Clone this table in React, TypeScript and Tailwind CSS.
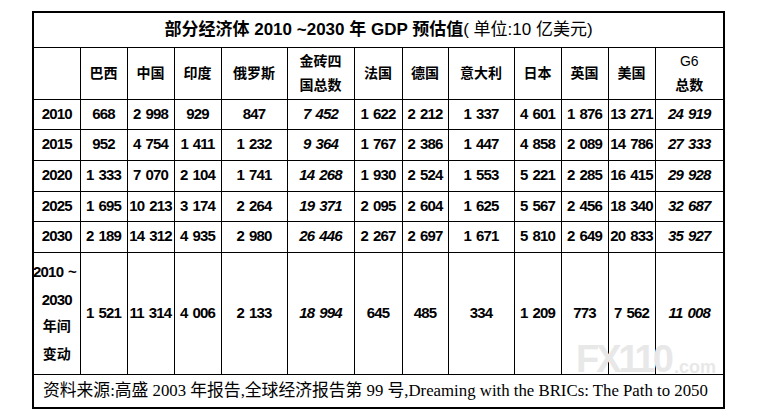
const cols = ['巴西', '中国', '印度', '俄罗斯', '金砖四国总数', '法国', '德国', '意大利', '日本', '英国', '美国', 'G6总数'];
const widths = [47, 47, 47, 47, 66, 67, 48, 46, 66, 47, 47, 47, 69];

const rows: { year: string; vals: string[]; h: string }[] = [
  { year: '2010', h: 'h-[30px]', vals: ['668', '2 998', '929', '847', '7 452', '1 622', '2 212', '1 337', '4 601', '1 876', '13 271', '24 919'] },
  { year: '2015', h: 'h-[31px]', vals: ['952', '4 754', '1 411', '1 232', '9 364', '1 767', '2 386', '1 447', '4 858', '2 089', '14 786', '27 333'] },
  { year: '2020', h: 'h-[31px]', vals: ['1 333', '7 070', '2 104', '1 741', '14 268', '1 930', '2 524', '1 553', '5 221', '2 285', '16 415', '29 928'] },
  { year: '2025', h: 'h-[30px]', vals: ['1 695', '10 213', '3 174', '2 264', '19 371', '2 095', '2 604', '1 625', '5 567', '2 456', '18 340', '32 687'] },
  { year: '2030', h: 'h-[31px]', vals: ['2 189', '14 312', '4 935', '2 980', '26 446', '2 267', '2 697', '1 671', '5 810', '2 649', '20 833', '35 927'] },
];

const change = ['1 521', '11 314', '4 006', '2 133', '18 994', '645', '485', '334', '1 209', '773', '7 562', '11 008'];

// italic columns: 金砖四国总数 (index 4) and G6总数 (index 11)
const italic = (i: number) => i === 4 || i === 11;

const td = 'border border-black text-center p-0 whitespace-nowrap';
const num = 'text-[15px] font-bold tracking-[-0.8px] [word-spacing:1.5px]';

export default function App() {
  return (
    <div className="relative w-[759px] h-[417px] bg-white font-['Liberation_Sans','Noto_Sans_CJK_SC',sans-serif] text-black">
      <div className="pt-[11px] pl-[32px]">
        <table className="table-fixed border-collapse border-2 border-black w-[691px]">
          <colgroup>
            {widths.map((w, i) => <col key={i} style={{ width: w }} />)}
          </colgroup>
          <tbody>
            <tr className="h-[35px]">
              <td colSpan={13} className={`${td} text-[17px]`}>
                <span className="font-bold">部分经济体 2010 ~2030 年 GDP 预估值</span>
                <span>( 单位:10 亿美元)</span>
              </td>
            </tr>
            <tr className="h-[52px]">
              <td className={td}></td>
              {cols.map((c) => (
                <td key={c} className={`${td} text-[14px] font-bold leading-[24px]`}>
                  {c === '金砖四国总数' ? <>金砖四<br />国总数</> : c === 'G6总数' ? <><span className="font-normal">G6</span><br />总数</> : c}
                </td>
              ))}
            </tr>
            {rows.map((r) => (
              <tr key={r.year} className={r.h}>
                <td className={`${td} ${num}`}>{r.year}</td>
                {r.vals.map((v, i) => (
                  <td key={i} className={`${td} ${num} ${italic(i) ? 'italic' : ''}`}>{v}</td>
                ))}
              </tr>
            ))}
            <tr className="h-[122px]">
              <td className={`${td} ${num} leading-[27.5px]`}>
                <div className="flex flex-col items-center">
                  <span className="self-start -ml-[1px]">2010 ~</span>
                  <span>2030</span>
                  <span className="text-[14px] tracking-normal">年间</span>
                  <span className="text-[14px] tracking-normal">变动</span>
                </div>
              </td>
              {change.map((v, i) => (
                <td key={i} className={`${td} ${num} ${italic(i) ? 'italic' : ''}`}>{v}</td>
              ))}
            </tr>
            <tr className="h-[34px]">
              <td colSpan={13} className={`${td} text-left pl-[9px] text-[16.8px] font-['Liberation_Serif','Noto_Sans_CJK_SC',serif]`}>
                资料来源:高盛 2003 年报告,全球经济报告第 99 号,Dreaming with the BRICs: The Path to 2050
              </td>
            </tr>
          </tbody>
        </table>
      </div>
      <div className="absolute left-[576px] top-[340px] flex items-end gap-[3px] text-[#e8e8e8] pointer-events-none select-none">
        <span className="text-[38px] font-bold leading-none tracking-[-3px]">FX110</span>
        <span className="text-[18px] font-bold leading-none mb-[2px]">.com</span>
      </div>
    </div>
  );
}
